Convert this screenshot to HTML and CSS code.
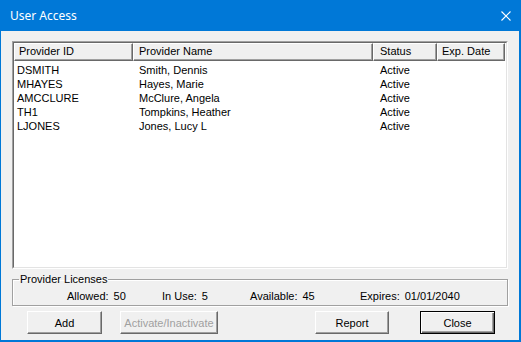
FILE: index.html
```html
<!DOCTYPE html>
<html>
<head>
<meta charset="utf-8">
<link rel="stylesheet" href="styles.css">
</head>
<body>
<div class="window">
  <div class="titlebar">
    <span class="title">User Access</span>
    <svg class="close-x" width="10" height="10" viewBox="0 0 10 10"><path d="M0.5 0.5 L9.5 9.5 M9.5 0.5 L0.5 9.5" stroke="#fff" stroke-width="1.1" fill="none"/></svg>
  </div>
  <div class="client">
    <div class="list">
      <div class="list-inner">
        <div class="header">
          <div class="hcell c1">Provider ID</div>
          <div class="hcell c2">Provider Name</div>
          <div class="hcell c3">Status</div>
          <div class="hcell c4">Exp. Date</div>
        </div>
        <div class="rows">
          <div class="row"><span class="d1">DSMITH</span><span class="d2">Smith, Dennis</span><span class="d3">Active</span><span class="d4"></span></div>
          <div class="row"><span class="d1">MHAYES</span><span class="d2">Hayes, Marie</span><span class="d3">Active</span><span class="d4"></span></div>
          <div class="row"><span class="d1">AMCCLURE</span><span class="d2">McClure, Angela</span><span class="d3">Active</span><span class="d4"></span></div>
          <div class="row"><span class="d1">TH1</span><span class="d2">Tompkins, Heather</span><span class="d3">Active</span><span class="d4"></span></div>
          <div class="row"><span class="d1">LJONES</span><span class="d2">Jones, Lucy L</span><span class="d3">Active</span><span class="d4"></span></div>
        </div>
      </div>
    </div>
    <fieldset class="licenses">
      <legend>Provider Licenses</legend>
      <div class="lic-row">
        <div class="lic i1"><span>Allowed:</span><span>50</span></div>
        <div class="lic i2"><span>In Use:</span><span>5</span></div>
        <div class="lic i3"><span>Available:</span><span>45</span></div>
        <div class="lic i4"><span>Expires:</span><span>01/01/2040</span></div>
      </div>
    </fieldset>
    <div class="buttons">
      <button class="btn b-add">Add</button>
      <button class="btn b-act" disabled>Activate/Inactivate</button>
      <button class="btn b-report">Report</button>
      <button class="btn b-close default">Close</button>
    </div>
  </div>
</div>
</body>
</html>
```
FILE: styles.css
```css
html, body {
  margin: 0;
  padding: 0;
  background: #0078d7;
}
.window {
  width: 521px;
  height: 342px;
  box-sizing: border-box;
  border-left: 1px solid #0078d7;
  border-right: 2px solid #0078d7;
  border-bottom: 2px solid #0078d7;
  background: #f0f0f0;
  display: flex;
  flex-direction: column;
  font-family: "Liberation Sans", Arial, sans-serif;
  font-size: 11px;
  color: #000;
}
.titlebar {
  height: 31px;
  flex: none;
  background: #0078d7;
  display: flex;
  align-items: center;
  padding-right: 10px;
  margin-left: -1px;
  margin-right: -2px;
  padding-left: 10px;
  color: #fff;
}
.title {
  font-family: "Noto Sans", "Open Sans", sans-serif;
  font-size: 12px;
  flex: 1;
  padding-bottom: 1px;
}
.close-x {
  display: block;
}
.client {
  padding: 10px 0 0 11px;
  flex: 1;
}
.list {
  width: 496px;
  height: 228px;
  box-sizing: border-box;
  border: 1px solid;
  border-color: #a0a0a0 #ffffff #ffffff #a0a0a0;
}
.list-inner {
  height: 100%;
  box-sizing: border-box;
  border: 1px solid;
  border-color: #696969 #e3e3e3 #e3e3e3 #696969;
  background: #fff;
}
.header {
  display: flex;
  height: 18px;
}
.hcell {
  box-sizing: border-box;
  height: 18px;
  background: #f0f0f0;
  border-top: 1px solid #fff;
  border-left: 1px solid #fff;
  border-right: 1px solid #696969;
  border-bottom: 1px solid #696969;
  box-shadow: inset -1px -1px 0 #a0a0a0;
  line-height: 15px;
  padding-left: 4px;
  white-space: nowrap;
}
.c1 { width: 119px; }
.c2 { width: 240px; padding-left: 5px; }
.c3 { width: 64px; padding-left: 6px; }
.c4 { width: 68px; padding-left: 4px; }
.rows {
  padding-top: 2px;
}
.row {
  display: grid;
  grid-template-columns: 119px 240px 64px 68px;
  height: 14px;
  line-height: 14px;
}
.row span { white-space: nowrap; }
.d1 { padding-left: 3px; }
.d2 { padding-left: 6px; }
.d3 { padding-left: 7px; }
.licenses {
  width: 496px;
  box-sizing: border-box;
  margin: 4px 0 0 0;
  padding: 3px 0 2px 0;
  border: 1px solid #a0a0a0;
  box-shadow: 1px 1px 0 #fff, inset 1px 1px 0 #fff;
  min-width: 0;
}
.licenses legend {
  padding: 0 1px;
  margin-left: 6px;
  line-height: 13px;
}
.lic-row {
  display: flex;
  padding-left: 54px;
  height: 14px;
  line-height: 14px;
}
.lic {
  display: flex;
  gap: 5px;
  white-space: nowrap;
}
.i1 { width: 95px; }
.i2 { width: 88px; }
.i3 { width: 110px; }
.buttons {
  display: flex;
  margin-top: 5px;
}
.btn {
  height: 23px;
  box-sizing: border-box;
  font-family: "Liberation Sans", Arial, sans-serif;
  font-size: 11px;
  color: #000;
  background: #f0f0f0;
  border: 1px solid;
  border-color: #fff #696969 #696969 #fff;
  box-shadow: inset -1px -1px 0 #a0a0a0;
  padding: 0;
  border-radius: 0;
}
.btn:disabled {
  color: #a0a0a0;
}
.b-add { width: 75px; margin-left: 15px; }
.b-act { width: 98px; margin-left: 18px; }
.b-report { width: 74px; margin-left: 97px; }
.b-close { width: 75px; margin-left: 31px; }
.btn.default {
  border: 1px solid #000;
  box-shadow: inset 1px 1px 0 #fff, inset -1px -1px 0 #696969, inset -2px -2px 0 #a0a0a0;
}
```
